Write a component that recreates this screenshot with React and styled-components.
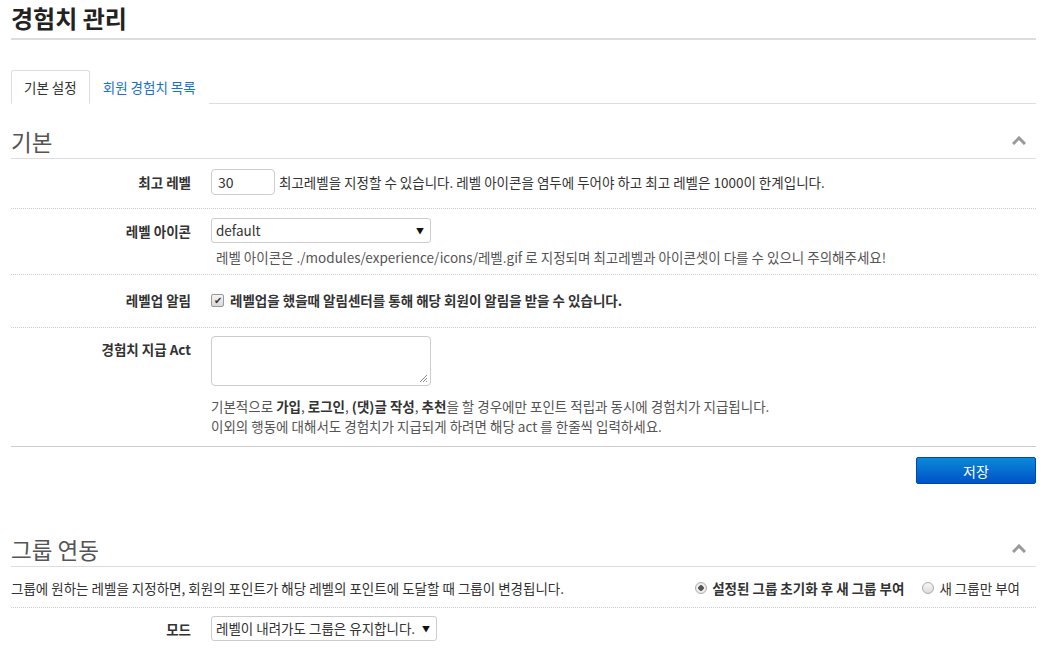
import styled, { createGlobalStyle } from "styled-components";

const GlobalStyle = createGlobalStyle`
    * { box-sizing: border-box; }
    body {
        margin: 0;
        background: #fff;
        color: #333;
        font-family: "Noto Sans CJK KR", "Noto Sans", "Liberation Sans", sans-serif;
        font-size: 13.5px;
    }
`;

const Page = styled.div`
    padding: 0 19px 0 11px;
`;

const Title = styled.h1`
    margin: 0;
    height: 40px;
    padding-top: 1px;
    font-size: 24px;
    font-weight: 700;
    line-height: 34px;
    color: #222;
    border-bottom: 2px solid #ddd;
`;

const Tabs = styled.ul`
    display: flex;
    list-style: none;
    margin: 30px 0 0;
    padding: 0;
    border-bottom: 1px solid #ddd;
    height: 34px;
`;

const Tab = styled.li`
    height: 34px;
    padding: 0 12px;
    line-height: 32px;
    font-size: 13.5px;
    color: ${(p) => (p.$active ? "#333" : "#1a73c8")};
    border: 1px solid ${(p) => (p.$active ? "#ddd" : "transparent")};
    border-bottom-color: ${(p) => (p.$active ? "#fff" : "transparent")};
    border-radius: 3px 3px 0 0;
    background: #fff;
`;

const SectionHead = styled.div`
    display: flex;
    align-items: center;
    justify-content: space-between;
    height: 36px;
    border-bottom: 1px solid #ddd;
    margin-top: ${(p) => p.$top}px;
`;

const SectionTitle = styled.h2`
    margin: 0;
    font-size: 22.5px;
    font-weight: 400;
    color: #555;
    line-height: 36px;
`;

const Collapse = styled.span`
    display: flex;
    width: 14px;
    margin-right: 10px;
`;

const Row = styled.div`
    display: flex;
    align-items: flex-start;
    padding: ${(p) => p.$pad || "9px 0 14px"};
    border-bottom: 1px ${(p) => (p.$solid ? "solid #ccc" : "dotted #ccc")};
`;

const Label = styled.div`
    width: 180px;
    flex: none;
    text-align: right;
    font-weight: 700;
    color: #333;
    line-height: 26px;
`;

const Field = styled.div`
    margin-left: 20px;
    display: flex;
    flex-direction: column;
    line-height: 26px;
`;

const Inline = styled.div`
    display: flex;
    align-items: center;
    gap: 4px;
`;

const TextInput = styled.div`
    width: 64px;
    height: 26px;
    border: 1px solid #ccc;
    border-radius: 4px;
    padding: 0 6px;
    line-height: 24px;
    font-size: 14px;
    color: #333;
`;

const SelectBox = styled.div`
    position: relative;
    width: ${(p) => p.$w}px;
    height: 25px;
    border: 1px solid #ccc;
    border-radius: 3px;
    padding: 0 22px 0 4px;
    line-height: 23px;
    font-size: 13.5px;
    color: #333;
    white-space: nowrap;
`;

const SelectArrow = styled.span`
    position: absolute;
    right: 6px;
    top: 0;
    font-size: 8px;
    color: #111;
`;

const Help = styled.p`
    margin: ${(p) => p.$margin || "0"};
    padding-left: ${(p) => p.$indent || 0}px;
    color: #555;
    font-size: 13.5px;
    line-height: 20px;
    b { color: #333; }
`;

const Check = styled.span`
    display: inline-flex;
    align-items: center;
    justify-content: center;
    width: 13px;
    height: 13px;
    border: 1px solid #999;
    border-radius: 2px;
    background: linear-gradient(#f4f4f4, #d8d8d8);
    font-size: 10px;
    color: #333;
    margin-right: 2px;
`;

const StrongText = styled.span`
    font-weight: 700;
    color: #333;
`;

const TextArea = styled.div`
    position: relative;
    width: 220px;
    height: 50px;
    border: 1px solid #ccc;
    border-radius: 4px;
`;

const Grip = styled.svg`
    position: absolute;
    right: 2px;
    bottom: 2px;
`;

const Actions = styled.div`
    display: flex;
    justify-content: flex-end;
    padding-top: 10px;
`;

const SaveButton = styled.button`
    width: 120px;
    height: 27px;
    border: 1px solid #0047b0;
    border-radius: 2px;
    background: linear-gradient(#0a8ad8, #0052c8);
    color: #fff;
    font-family: inherit;
    font-size: 14px;
`;

const DescRow = styled.div`
    display: flex;
    align-items: center;
    justify-content: space-between;
    height: 41px;
    border-bottom: 1px dotted #ccc;
    padding-top: 2px;
`;

const Desc = styled.span`
    color: #333;
    font-size: 13.5px;
`;

const Radios = styled.div`
    display: flex;
    gap: 18px;
    margin-right: 16px;
`;

const RadioItem = styled.span`
    display: inline-flex;
    align-items: center;
    gap: 5px;
    font-weight: ${(p) => (p.$on ? 700 : 400)};
    color: #333;
`;

const RadioDot = styled.span`
    width: 12px;
    height: 12px;
    border-radius: 50%;
    border: 1px solid #aaa;
    background: ${(p) =>
        p.$on
            ? "radial-gradient(circle, #555 0 2.5px, #eee 3px)"
            : "linear-gradient(#f6f6f6, #ddd)"};
`;

function CaretUp() {
    return (
        <svg width="14" height="9" viewBox="0 0 14 9">
            <path d="M1 8 L7 2 L13 8" fill="none" stroke="#999" strokeWidth="3" />
        </svg>
    );
}

function Select({ width, children }) {
    return (
        <SelectBox $w={width}>
            {children}
            <SelectArrow>▼</SelectArrow>
        </SelectBox>
    );
}

export default function App() {
    return (
        <Page>
            <GlobalStyle />
            <Title>경험치 관리</Title>
            <Tabs>
                <Tab $active>기본 설정</Tab>
                <Tab>회원 경험치 목록</Tab>
            </Tabs>

            <SectionHead $top={19}>
                <SectionTitle>기본</SectionTitle>
                <Collapse>
                    <CaretUp />
                </Collapse>
            </SectionHead>

            <Row $pad="10px 0 13px">
                <Label>최고 레벨</Label>
                <Field>
                    <Inline>
                        <TextInput>30</TextInput>
                        <span>
                            최고레벨을 지정할 수 있습니다. 레벨 아이콘을 염두에 두어야 하고 최고 레벨은 1000이 한계입니다.
                        </span>
                    </Inline>
                </Field>
            </Row>

            <Row $pad="9px 0 7px">
                <Label>레벨 아이콘</Label>
                <Field>
                    <Select width={220}>default</Select>
                    <Help $margin="4px 0 0" $indent={5}>
                        레벨 아이콘은 ./modules/experience/icons/레벨.gif 로 지정되며 최고레벨과 아이콘셋이 다를 수 있으니 주의해주세요!
                    </Help>
                </Field>
            </Row>

            <Row $pad="12px 0 14px">
                <Label>레벨업 알림</Label>
                <Field>
                    <Inline>
                        <Check>✔</Check>
                        <StrongText>레벨업을 했을때 알림센터를 통해 해당 회원이 알림을 받을 수 있습니다.</StrongText>
                    </Inline>
                </Field>
            </Row>

            <Row $pad="8px 0 10px" $solid>
                <Label>경험치 지급 Act</Label>
                <Field>
                    <TextArea>
                        <Grip width="9" height="9" viewBox="0 0 9 9">
                            <path d="M8 1 L1 8 M8 4 L4 8 M8 7 L7 8" stroke="#888" strokeWidth="1" />
                        </Grip>
                    </TextArea>
                    <Help $margin="10px 0 0">
                        기본적으로 <b>가입</b>, <b>로그인</b>, <b>(댓)글 작성</b>, <b>추천</b>을 할 경우에만 포인트 적립과 동시에 경험치가 지급됩니다.
                        <br />
                        이외의 행동에 대해서도 경험치가 지급되게 하려면 해당 act 를 한줄씩 입력하세요.
                    </Help>
                </Field>
            </Row>

            <Actions>
                <SaveButton>저장</SaveButton>
            </Actions>

            <SectionHead $top={47}>
                <SectionTitle>그룹 연동</SectionTitle>
                <Collapse>
                    <CaretUp />
                </Collapse>
            </SectionHead>

            <DescRow>
                <Desc>그룹에 원하는 레벨을 지정하면, 회원의 포인트가 해당 레벨의 포인트에 도달할 때 그룹이 변경됩니다.</Desc>
                <Radios>
                    <RadioItem $on>
                        <RadioDot $on />
                        설정된 그룹 초기화 후 새 그룹 부여
                    </RadioItem>
                    <RadioItem>
                        <RadioDot />
                        새 그룹만 부여
                    </RadioItem>
                </Radios>
            </DescRow>

            <Row $pad="8px 0 16px">
                <Label>모드</Label>
                <Field>
                    <Select width={226}>레벨이 내려가도 그룹은 유지합니다.</Select>
                </Field>
            </Row>
        </Page>
    );
}
